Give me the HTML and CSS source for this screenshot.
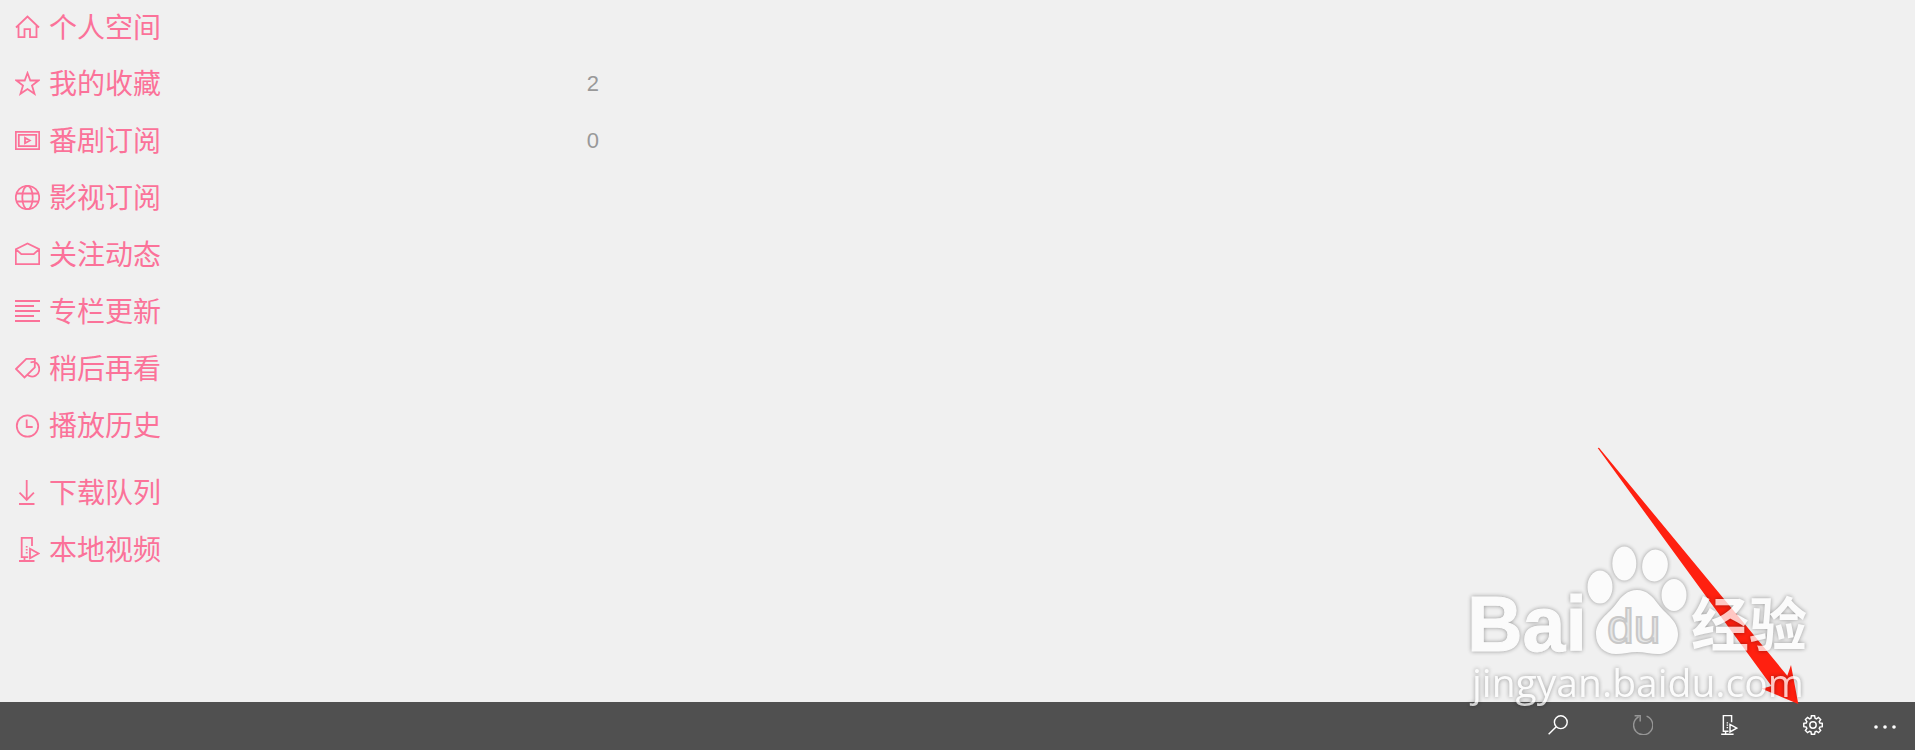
FILE: index.html
```html
<!DOCTYPE html>
<html lang="zh-CN">
<head>
    <meta charset="UTF-8">
    <meta name="viewport" content="width=device-width, initial-scale=1.0">
    <title>我的</title>
    <link rel="stylesheet" href="styles.css">
</head>
<body>

    <main class="content">
        <nav class="menu">
            <a href="#space" class="menu-item">
                <svg class="icon" viewBox="0 0 25 25"><path d="M1 12.5 12.5 1.5 24 12.5M3.5 10.5v11.7h6v-8h5.500v8h6.500V10.500"/></svg>
                <span>个人空间</span>
            </a>
            <a href="#favorites" class="menu-item">
                <svg class="icon" viewBox="0 0 25 25"><path d="M12.500 2 15.300 9.500H23.500L17 14.500 19.500 22.800 12.500 18 5.500 22.800 8 14.500 1.500 9.500H9.700z"/></svg>
                <span>我的收藏</span>
                <span class="count">2</span>
            </a>
            <a href="#bangumi" class="menu-item">
                <svg class="icon" viewBox="0 0 25 25"><path d="M.8 3.800h23.400v17.400H.8zM3.800 6.800h17.400v11.400H3.800zM10 9.800v5.400l4.800-2.700z"/></svg>
                <span>番剧订阅</span>
                <span class="count">0</span>
            </a>
            <a href="#movies" class="menu-item">
                <svg class="icon" viewBox="0 0 25 25"><circle cx="12.500" cy="12.500" r="11.700"/><ellipse cx="12.500" cy="12.500" rx="5.200" ry="11.700"/><path d="M1.500 8.500h22M1.500 16.500h22"/></svg>
                <span>影视订阅</span>
            </a>
            <a href="#feed" class="menu-item">
                <svg class="icon" viewBox="0 0 25 25"><path d="M.8 7.200 12.500 1.500 24.200 7.200v15H.8zM.8 7.200l5.500 5h12.400l5.500-5"/></svg>
                <span>关注动态</span>
            </a>
            <a href="#articles" class="menu-item">
                <svg class="icon icon-lines" viewBox="0 0 25 25"><path d="M0 2h25M0 7h19M0 12h25M0 17h19M0 22h25"/></svg>
                <span>专栏更新</span>
            </a>
            <a href="#later" class="menu-item">
                <svg class="icon" viewBox="0 0 25 25"><path d="M1 13 11.300 2.800H19.800V11.300L9.500 21.500zM15.500 6.500c5-2 8.800 2 8.800 6.500 0 6-6 9.500-11.500 6.300"/></svg>
                <span>稍后再看</span>
            </a>
            <a href="#history" class="menu-item">
                <svg class="icon" viewBox="0 0 25 25"><circle cx="12.500" cy="13" r="10.700"/><path d="M11.700 6.500v7.500h6"/></svg>
                <span>播放历史</span>
            </a>
            <a href="#downloads" class="menu-item menu-item-group">
                <svg class="icon" viewBox="0 0 25 25"><path d="M11.700 0v20M4.500 12.700l7.200 7.300 7.200-7.300M4 24h15.500"/></svg>
                <span>下载队列</span>
            </a>
            <a href="#local" class="menu-item">
                <svg class="icon" viewBox="0 0 25 25"><g id="local-icon"><path d="M17 9V.8H6.700v19.400h6.500M9.500 20v4M4 24h15.500M15 11.800v9.400l8.500-4.700z"/><path d="M11.700 9v9" stroke-dasharray="1.500 1.500"/></g></svg>
                <span>本地视频</span>
            </a>
        </nav>
    </main>

    <footer class="command-bar">
        <button type="button" class="command" aria-label="搜索">
            <svg class="icon" viewBox="0 0 25 25"><circle cx="16" cy="9" r="8"/><path d="M10.300 14.700.8 24.200"/></svg>
        </button>
        <button type="button" class="command" aria-label="刷新" disabled>
            <svg class="icon" viewBox="0 0 25 25"><path d="M17 1.500A12 12 0 1 1 7 2.200M2 1h7v7"/></svg>
        </button>
        <button type="button" class="command" aria-label="本地视频">
            <svg class="icon" viewBox="0 0 25 25"><use href="#local-icon"/></svg>
        </button>
        <button type="button" class="command" aria-label="设置">
            <svg class="icon" viewBox="0 0 25 25"><circle cx="12.500" cy="12.500" r="4"/><path d="M10.500 1h4l.6 3.100 1.700.7L19.400 3l2.700 2.700-1.800 2.600.7 1.700 3.100.5v4l-3.100.6-.7 1.700 1.800 2.600-2.700 2.700-2.600-1.800-1.700.7-.6 3.100h-4L10 21l-1.700-.7-2.600 1.800L3 19.400l1.800-2.600-.7-1.700L1 14.500v-4l3.100-.5.7-1.700L3 5.700 5.700 3l2.600 1.800 1.700-.7z"/></svg>
        </button>
        <button type="button" class="command command-more" aria-label="更多">
            <svg class="dots" viewBox="0 0 24 10"><circle cx="3" cy="7" r="1.800"/><circle cx="12" cy="7" r="1.800"/><circle cx="21" cy="7" r="1.800"/></svg>
        </button>
    </footer>

    <svg class="overlay" viewBox="0 0 380 290">
        <path class="arrow" d="M147.700 18 149 17.700 337.300 245.700 341 235 348.300 274 311.700 258.700 321.500 256z"/>
        <g class="watermark">
            <text class="wm-bai" x="17" y="221">Bai</text>
            <ellipse cx="150" cy="157" rx="12.500" ry="16.500"/>
            <ellipse cx="174.300" cy="133.500" rx="12" ry="17"/>
            <ellipse cx="205" cy="135.500" rx="12.800" ry="16" transform="rotate(8 205 135.500)"/>
            <ellipse cx="224" cy="165" rx="12.500" ry="16"/>
            <path d="M187 160c10 0 16 7 21 14 7 10 20 16 20 30 0 12-9 20-20 20-8 0-14-2-21-2s-13 2-21 2c-12 0-20-8-20-20 0-14 13-20 20-30 5-7 11-14 21-14z"/>
            <text class="wm-exp" x="241" y="216">经验</text>
            <text class="wm-url" x="22" y="267">jingyan.baidu.com</text>
        </g>
        <text class="wm-du" x="157" y="213">du</text>
    </svg>

</body>
</html>
```

FILE: styles.css
```css
* {
    box-sizing: border-box;
}

body {
    font-family: "Liberation Sans", "Noto Sans CJK SC", sans-serif;
    background-color: #f0f0f0;
    margin: 0;
    min-height: 100vh;
    display: flex;
    flex-direction: column;
    position: relative;
}

.content {
    flex: 1;
}

.menu {
    max-width: 599px;
}

.menu-item {
    display: flex;
    align-items: center;
    gap: 9px;
    height: 57px;
    padding-left: 15px;
    color: #fb7299;
    font-size: 28px;
    line-height: 40px;
    text-decoration: none;
}

.menu-item span {
    padding-top: 2px;
}

.menu-item:first-child {
    height: 55px;
}

.menu-item-group {
    margin-top: 10px;
}

.menu-item .count {
    margin-left: auto;
    padding-top: 0;
    color: #999;
    font-size: 22px;
}

.icon {
    width: 25px;
    height: 25px;
    fill: none;
    stroke: currentColor;
    stroke-width: 1.8;
    flex-shrink: 0;
}

.icon-lines {
    stroke-width: 2;
}

.command-bar {
    display: flex;
    justify-content: flex-end;
    height: 48px;
    padding-bottom: 2px;
    background-color: #505050;
}

.command {
    display: flex;
    align-items: center;
    justify-content: center;
    width: 85px;
    padding: 0;
    border: none;
    background: none;
    color: #fff;
    cursor: pointer;
}

.command:disabled {
    color: #969696;
    cursor: default;
}

.command .icon {
    width: 20px;
    height: 20px;
}

.command-more {
    width: 60px;
}

.dots {
    width: 24px;
    height: 10px;
    fill: currentColor;
}

.overlay {
    position: absolute;
    right: 85px;
    bottom: 30px;
    width: 380px;
    height: 290px;
    pointer-events: none;
}

.arrow {
    fill: #ff2010;
}

.watermark {
    fill: #fff;
    opacity: 0.75;
    filter: drop-shadow(0 0 2px rgba(0, 0, 0, 0.5));
}

.wm-bai {
    font-size: 77px;
    font-weight: bold;
    stroke: #fff;
    stroke-width: 1;
}

.wm-exp {
    font-family: "Noto Sans CJK SC", sans-serif;
    font-size: 58px;
    font-weight: bold;
}

.wm-url {
    font-family: "Open Sans", sans-serif;
    font-size: 39px;
    font-weight: 500;
}

.wm-du {
    font-size: 48px;
    fill: #e6e6e6;
    stroke: #c8c8c8;
    stroke-width: 2;
}
```
